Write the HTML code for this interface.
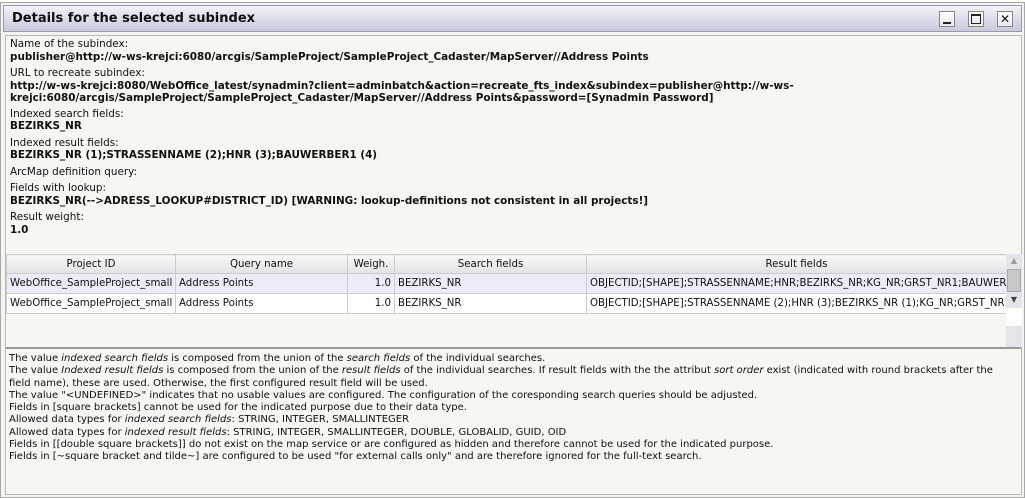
<!DOCTYPE html>
<html><head><meta charset="utf-8"><style>
*{margin:0;padding:0;box-sizing:border-box}
body{width:1025px;height:498px;background:#fff;font-family:Verdana,"DejaVu Sans",sans-serif;font-size:10.4px;color:#111;position:relative;overflow:hidden}
.win{position:absolute;left:0;top:2px;width:1025px;height:496px;border:1px solid #a8a8a8;background:#f4f4f0}
.title{position:absolute;left:2px;top:2px;right:2px;height:27px;background:linear-gradient(#f2f2f8,#c8c9dc);border:1px solid #9a9aa8;}
.title span{position:absolute;left:8px;top:5px;font-weight:bold;font-size:13px;color:#111}
.btn{position:absolute;top:5px;width:16px;height:16px;border:1px solid #888;background:linear-gradient(#fff,#e8e8ee);}
.content{position:absolute;left:4px;top:32px;width:1017px;height:460px;border:1px solid #b8b8b8;background:#f6f7f2}
.t{position:absolute;white-space:nowrap;line-height:13px}
.b{font-weight:bold}
table{border-collapse:collapse;position:absolute;left:0;top:218px;table-layout:fixed}
td,th{height:20px;border:1px solid #ccc;white-space:nowrap;overflow:hidden;padding:0 3px;font-weight:normal;font-size:10.2px}
th{background:linear-gradient(#f8f8f8,#e2e2e6);height:19px}
tr.r1 td{background:#ececf8}
tr.r2 td{background:#fff}
.foot{position:absolute;left:0;top:311px;width:1015px;border-top:2px solid #999;padding:4px 3px;font-size:10px;line-height:12.3px;white-space:nowrap}
</style></head><body>
<div class="win">
<div class="title"><span>Details for the selected subindex</span>
<div class="btn" style="left:935px"><div style="position:absolute;left:3px;top:10px;width:8px;height:2px;background:#222"></div></div>
<div class="btn" style="left:964px"><div style="position:absolute;left:2px;top:2px;width:10px;height:10px;border:1px solid #222;border-top-width:2px"></div></div>
<div class="btn" style="left:993px;font-size:12px;line-height:14px;text-align:center">✕</div>
</div>
<div class="content">
<div class="t" style="left:4px;top:2px">Name of the subindex:</div>
<div class="t b" style="left:4px;top:15px">publisher@http://w-ws-krejci:6080/arcgis/SampleProject/SampleProject_Cadaster/MapServer//Address Points</div>
<div class="t" style="left:4px;top:31px">URL to recreate subindex:</div>
<div class="t b" style="left:4px;top:44px">http://w-ws-krejci:8080/WebOffice_latest/synadmin?client=adminbatch&amp;action=recreate_fts_index&amp;subindex=publisher@http://w-ws-</div>
<div class="t b" style="left:4px;top:56px">krejci:6080/arcgis/SampleProject/SampleProject_Cadaster/MapServer//Address Points&amp;password=[Synadmin Password]</div>
<div class="t" style="left:4px;top:72px">Indexed search fields:</div>
<div class="t b" style="left:4px;top:84px">BEZIRKS_NR</div>
<div class="t" style="left:4px;top:101px">Indexed result fields:</div>
<div class="t b" style="left:4px;top:113px">BEZIRKS_NR (1);STRASSENNAME (2);HNR (3);BAUWERBER1 (4)</div>
<div class="t" style="left:4px;top:130px">ArcMap definition query:</div>
<div class="t" style="left:4px;top:146px">Fields with lookup:</div>
<div class="t b" style="left:4px;top:159px">BEZIRKS_NR(--&gt;ADRESS_LOOKUP#DISTRICT_ID) [WARNING: lookup-definitions not consistent in all projects!]</div>
<div class="t" style="left:4px;top:175px">Result weight:</div>
<div class="t b" style="left:4px;top:188px">1.0</div>
<table style="width:1000px">
<colgroup><col style="width:169px"><col style="width:172px"><col style="width:47px"><col style="width:192px"><col style="width:420px"></colgroup>
<tr><th>Project ID</th><th>Query name</th><th>Weigh.</th><th>Search fields</th><th>Result fields</th></tr>
<tr class="r1"><td>WebOffice_SampleProject_small</td><td>Address Points</td><td style="text-align:right">1.0</td><td>BEZIRKS_NR</td><td>OBJECTID;[SHAPE];STRASSENNAME;HNR;BEZIRKS_NR;KG_NR;GRST_NR1;BAUWERBER1</td></tr>
<tr class="r2"><td>WebOffice_SampleProject_small</td><td>Address Points</td><td style="text-align:right">1.0</td><td>BEZIRKS_NR</td><td>OBJECTID;[SHAPE];STRASSENNAME (2);HNR (3);BEZIRKS_NR (1);KG_NR;GRST_NR1</td></tr>
</table>
<div style="position:absolute;left:1000px;top:218px;width:16px;height:93px;background:#e4e4ea">
<div style="position:absolute;left:0;top:0;width:16px;height:14px;color:#999;font-size:8px;text-align:center;line-height:14px">▲</div>
<div style="position:absolute;left:1px;top:15px;width:14px;height:23px;background:#c8c8c8;border:1px solid #aaa"></div>
<div style="position:absolute;left:0;top:39px;width:16px;height:14px;color:#444;font-size:8px;text-align:center;line-height:14px">▼</div>
<div style="position:absolute;left:0;top:54px;width:16px;height:18px;background:#fff"></div>
</div>
<div class="foot">
The value <i>indexed search fields</i> is composed from the union of the <i>search fields</i> of the individual searches.<br>
The value <i>Indexed result fields</i> is composed from the union of the <i>result fields</i> of the individual searches. If result fields with the the attribut <i>sort order</i> exist (indicated with round brackets after the<br>
field name), these are used. Otherwise, the first configured result field will be used.<br>
The value "&lt;UNDEFINED&gt;" indicates that no usable values are configured. The configuration of the coresponding search queries should be adjusted.<br>
Fields in [square brackets] cannot be used for the indicated purpose due to their data type.<br>
Allowed data types for <i>indexed search fields</i>: STRING, INTEGER, SMALLINTEGER<br>
Allowed data types for <i>indexed result fields</i>: STRING, INTEGER, SMALLINTEGER, DOUBLE, GLOBALID, GUID, OID<br>
Fields in [[double square brackets]] do not exist on the map service or are configured as hidden and therefore cannot be used for the indicated purpose.<br>
Fields in [~square bracket and tilde~] are configured to be used "for external calls only" and are therefore ignored for the full-text search.
</div>
</div>
</div>
</body></html>
